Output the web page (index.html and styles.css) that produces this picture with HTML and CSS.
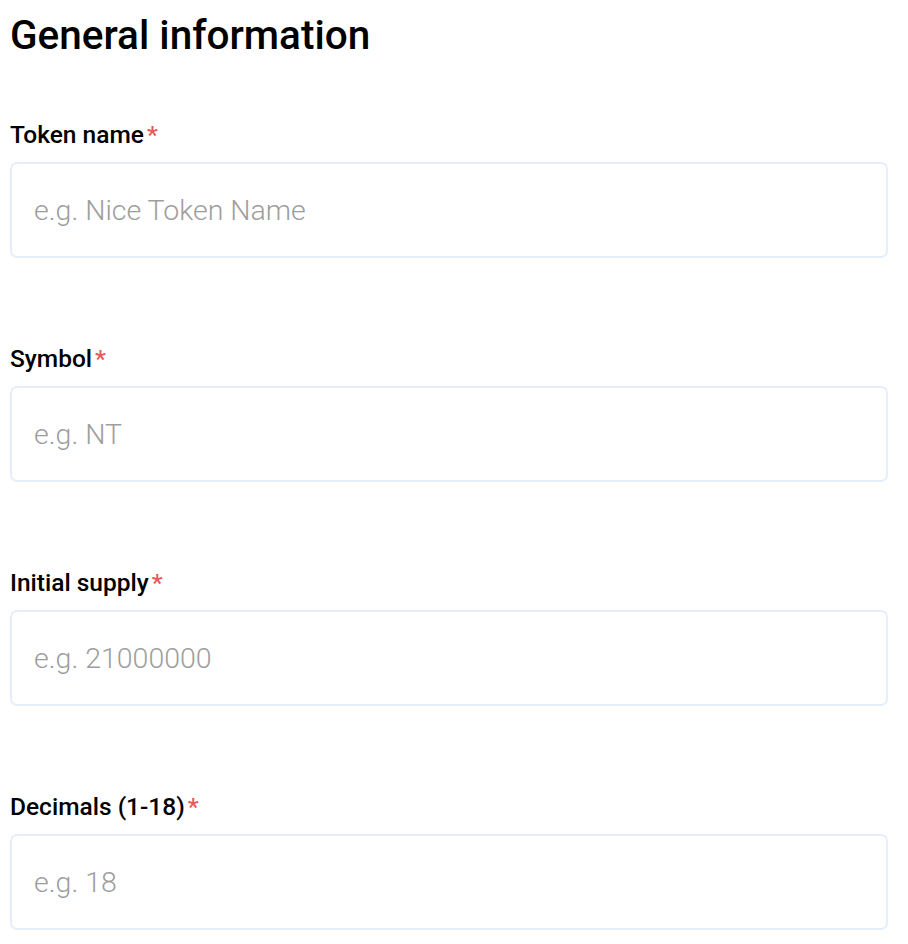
FILE: index.html
```html
<!DOCTYPE html>
<html lang="en">
<head>
<meta charset="utf-8">
<title>General information</title>
<link rel="stylesheet" href="styles.css">
</head>
<body>
<main class="page">
  <h1 class="title">General information</h1>
  <form class="form">
    <div class="field">
      <label class="label" for="name">Token name<span class="req">*</span></label>
      <input class="input" id="name" type="text" placeholder="e.g. Nice Token Name">
    </div>
    <div class="field">
      <label class="label" for="symbol">Symbol<span class="req">*</span></label>
      <input class="input" id="symbol" type="text" placeholder="e.g. NT">
    </div>
    <div class="field">
      <label class="label" for="supply">Initial supply<span class="req">*</span></label>
      <input class="input" id="supply" type="text" placeholder="e.g. 21000000">
    </div>
    <div class="field">
      <label class="label" for="decimals">Decimals (1-18)<span class="req">*</span></label>
      <input class="input" id="decimals" type="text" placeholder="e.g. 18">
    </div>
  </form>
</main>
</body>
</html>
```

FILE: styles.css
```css
html, body {
  margin: 0;
  padding: 0;
  background: #ffffff;
}

body {
  font-family: Roboto, "Liberation Sans", sans-serif;
  color: #000000;
}

.page {
  width: 878px;
  padding: 11px 0 0 10px;
}

.title {
  margin: 0;
  font-size: 40.5px;
  line-height: 48px;
  font-weight: 500;
}

.form {
  display: flex;
  flex-direction: column;
  gap: 87px;
  margin-top: 62px;
}

.field {
  display: flex;
  flex-direction: column;
  gap: 13px;
}

.label {
  font-size: 24.5px;
  line-height: 28px;
  font-weight: 500;
}

.req {
  color: #eb5757;
  margin-left: 3px;
}

.input {
  box-sizing: border-box;
  width: 100%;
  height: 96px;
  margin: 0;
  padding: 0 22px;
  border: 2px solid #e6eefc;
  border-radius: 7px;
  background: #ffffff;
  font-family: Roboto, "Liberation Sans", sans-serif;
  font-size: 28.5px;
  font-weight: 300;
  color: #000000;
  outline: none;
}

.input::placeholder {
  color: #9e9e9e;
  opacity: 1;
}
```
